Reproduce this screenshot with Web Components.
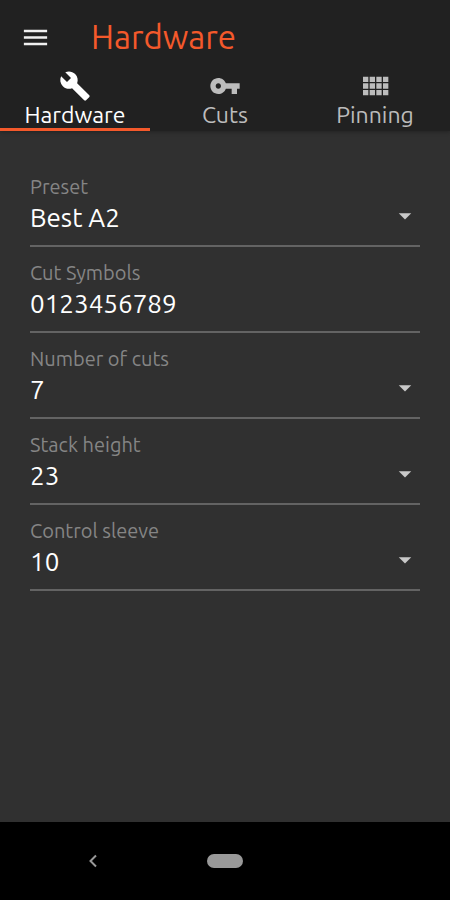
<!DOCTYPE html>
<html lang="en">
<head>
<meta charset="utf-8">
<meta name="viewport" content="width=device-width, initial-scale=1">
<title>Hardware</title>
<style>
  body {
    margin: 0;
    background: #303030;
    font-family: Ubuntu, "Noto Sans", sans-serif;
  }
</style>
</head>
<body>
<pin-app>
  <app-bar slot="header">Hardware</app-bar>
  <tab-bar slot="header">
    <tab-item icon="build" active>Hardware</tab-item>
    <tab-item icon="key">Cuts</tab-item>
    <tab-item icon="grid">Pinning</tab-item>
  </tab-bar>
  <select-field label="Preset" value="Best A2"></select-field>
  <text-field label="Cut Symbols" value="0123456789"></text-field>
  <select-field label="Number of cuts" value="7"></select-field>
  <select-field label="Stack height" value="23"></select-field>
  <select-field label="Control sleeve" value="10"></select-field>
  <system-nav slot="footer"></system-nav>
</pin-app>

<script>
const ICONS = {
  menu: 'M3 18h18v-2H3v2zm0-5h18v-2H3v2zm0-7v2h18V6H3z',
  build: 'M22.7 19l-9.1-9.1c.9-2.3.4-5-1.5-6.9-2-2-5-2.4-7.4-1.3L9 6 6 9 1.6 4.7C.4 7.1.9 10.1 2.9 12.1c1.9 1.9 4.6 2.4 6.9 1.5l9.1 9.1c.4.4 1 .4 1.4 0l2.3-2.3c.5-.4.5-1.1.1-1.4z',
  key: 'M12.65 10C11.83 7.67 9.61 6 7 6c-3.31 0-6 2.69-6 6s2.69 6 6 6c2.61 0 4.83-1.67 5.65-4H17v4h4v-4h2v-4H12.65zM7 14c-1.1 0-2-.9-2-2s.9-2 2-2 2 .9 2 2-.9 2-2 2z',
  grid: 'M3 9h4V5H3v4zm0 5h4v-4H3v4zm5 0h4v-4H8v4zm5 0h4v-4h-4v4zM8 9h4V5H8v4zm5-4v4h4V5h-4zm5 9h4v-4h-4v4zM3 19h4v-4H3v4zm5 0h4v-4H8v4zm5 0h4v-4h-4v4zm5 0h4v-4h-4v4zm0-14v4h4V5h-4z',
  arrow: 'M7 9l5 5 5-5z'
};

const icon = (name, size) =>
  `<svg width="${size}" height="${size}" viewBox="0 0 24 24" fill="currentColor" aria-hidden="true"><path d="${ICONS[name]}"/></svg>`;

class PinApp extends HTMLElement {
  constructor() {
    super();
    this.attachShadow({mode: 'open'});
  }

  connectedCallback() {
    this.shadowRoot.innerHTML = `
    <style>
      :host {
        display: flex;
        flex-direction: column;
        min-height: 100vh;
      }
      header {
        background: #212121;
        box-shadow: 0 1px 4px rgba(0, 0, 0, 0.3);
      }
      main {
        flex: 1;
        padding: 30px;
      }
    </style>
    <header><slot name="header"></slot></header>
    <main><slot></slot></main>
    <slot name="footer"></slot>
    `;
  }
}

class AppBar extends HTMLElement {
  constructor() {
    super();
    this.attachShadow({mode: 'open'});
  }

  connectedCallback() {
    this.shadowRoot.innerHTML = `
    <style>
      :host {
        display: flex;
        align-items: center;
        gap: 40px;
        padding: 16px 20px 0;
      }
      button {
        display: flex;
        padding: 0;
        border: 0;
        background: none;
        color: #f0f0f0;
      }
      h1 {
        margin: 0;
        font-size: 33px;
        line-height: 42px;
        font-weight: 400;
        color: #f4592b;
      }
    </style>
    <button aria-label="Menu">${icon('menu', 31)}</button>
    <h1><slot></slot></h1>
    `;
  }
}

class TabBar extends HTMLElement {
  constructor() {
    super();
    this.attachShadow({mode: 'open'});
  }

  connectedCallback() {
    this.shadowRoot.innerHTML = `
    <style>
      :host {
        display: block;
        padding-top: 12px;
      }
      nav {
        display: grid;
        grid-template-columns: repeat(3, 1fr);
      }
    </style>
    <nav><slot></slot></nav>
    `;
  }
}

class TabItem extends HTMLElement {
  constructor() {
    super();
    this.attachShadow({mode: 'open'});
  }

  connectedCallback() {
    this.shadowRoot.innerHTML = `
    <style>
      :host {
        display: block;
        color: #bcbcbc;
      }
      :host([active]) {
        color: #fff;
      }
      button {
        display: flex;
        flex-direction: column;
        align-items: center;
        width: 100%;
        padding: 0;
        border: 0;
        border-bottom: 3px solid transparent;
        background: none;
        color: inherit;
        font-family: inherit;
        font-size: 23px;
        line-height: 26px;
      }
      :host([active]) button {
        border-color: #f4592b;
      }
    </style>
    <button>${icon(this.getAttribute('icon'), 32)}<span><slot></slot></span></button>
    `;
  }
}

// label, control and underline shared by both kinds of field
const FIELD_STYLE = `
  :host {
    display: block;
    border-bottom: 2px solid #636363;
    padding: 14px 0 10px;
  }
  label {
    display: block;
    font-size: 20px;
    line-height: 24px;
    color: #858585;
  }
  .control {
    display: grid;
    align-items: center;
  }
  select, input {
    grid-area: 1 / 1;
    appearance: none;
    box-sizing: border-box;
    width: 100%;
    height: 36px;
    margin: 0;
    padding: 0;
    border: 0;
    border-radius: 0;
    outline: 0;
    background: none;
    color: #fff;
    font-family: inherit;
    font-size: 26px;
  }
  svg {
    grid-area: 1 / 1;
    justify-self: end;
    pointer-events: none;
    color: #c8c8c8;
  }
`;

class SelectField extends HTMLElement {
  constructor() {
    super();
    this.attachShadow({mode: 'open'});
  }

  connectedCallback() {
    this.shadowRoot.innerHTML = `
    <style>${FIELD_STYLE}</style>
    <label for="control">${this.getAttribute('label')}</label>
    <div class="control">
      <select id="control"><option>${this.getAttribute('value')}</option></select>
      ${icon('arrow', 30)}
    </div>
    `;
  }
}

class TextField extends HTMLElement {
  constructor() {
    super();
    this.attachShadow({mode: 'open'});
  }

  connectedCallback() {
    this.shadowRoot.innerHTML = `
    <style>${FIELD_STYLE}</style>
    <label for="control">${this.getAttribute('label')}</label>
    <div class="control">
      <input id="control" type="text" value="${this.getAttribute('value')}">
    </div>
    `;
  }
}

class SystemNav extends HTMLElement {
  constructor() {
    super();
    this.attachShadow({mode: 'open'});
  }

  connectedCallback() {
    this.shadowRoot.innerHTML = `
    <style>
      :host {
        display: grid;
        grid-template-columns: 1fr 36px 1fr;
        align-items: center;
        padding: 32px 0;
        background: #000;
      }
      button {
        display: flex;
        justify-content: center;
        padding: 0;
        border: 0;
        background: none;
        color: #999;
      }
      .home {
        height: 14px;
        border-radius: 7px;
        background: #999;
      }
      .back {
        justify-self: center;
        padding-right: 22px;
      }
    </style>
    <button class="back" aria-label="Back">
      <svg width="10" height="14" viewBox="0 0 10 14" fill="none" stroke="currentColor" stroke-width="2"><path d="M8 1.5L2.5 7 8 12.5"/></svg>
    </button>
    <button class="home" aria-label="Home"></button>
    `;
  }
}

customElements.define('pin-app', PinApp);
customElements.define('app-bar', AppBar);
customElements.define('tab-bar', TabBar);
customElements.define('tab-item', TabItem);
customElements.define('select-field', SelectField);
customElements.define('text-field', TextField);
customElements.define('system-nav', SystemNav);
</script>
</body>
</html>
